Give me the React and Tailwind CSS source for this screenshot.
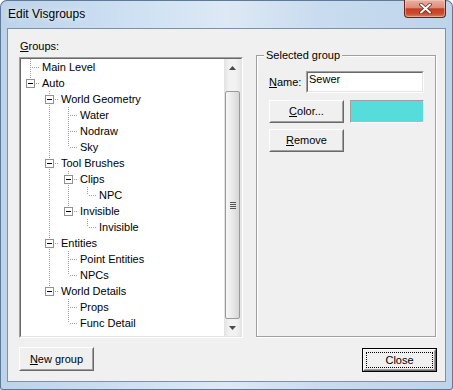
import React from 'react';

const FONT = { fontFamily: '"Liberation Sans", Arial, sans-serif' };

// tree rows: level, label, box (has children), last sibling, ancestor lines continue
const rows = [
  { label: 'Main Level', level: 0, box: false, last: false, cont: [] },
  { label: 'Auto', level: 0, box: true, last: true, cont: [] },
  { label: 'World Geometry', level: 1, box: true, last: false, cont: [false] },
  { label: 'Water', level: 2, box: false, last: false, cont: [false, true] },
  { label: 'Nodraw', level: 2, box: false, last: false, cont: [false, true] },
  { label: 'Sky', level: 2, box: false, last: true, cont: [false, true] },
  { label: 'Tool Brushes', level: 1, box: true, last: false, cont: [false] },
  { label: 'Clips', level: 2, box: true, last: false, cont: [false, true] },
  { label: 'NPC', level: 3, box: false, last: true, cont: [false, true, true] },
  { label: 'Invisible', level: 2, box: true, last: true, cont: [false, true] },
  { label: 'Invisible', level: 3, box: false, last: true, cont: [false, true, false] },
  { label: 'Entities', level: 1, box: true, last: false, cont: [false] },
  { label: 'Point Entities', level: 2, box: false, last: false, cont: [false, true] },
  { label: 'NPCs', level: 2, box: false, last: true, cont: [false, true] },
  { label: 'World Details', level: 1, box: true, last: true, cont: [false] },
  { label: 'Props', level: 2, box: false, last: false, cont: [false, false] },
  { label: 'Func Detail', level: 2, box: false, last: true, cont: [false, false] },
];

function Connector({ level, box, last, cont }) {
  const w = 21 + level * 19;
  const x = (k) => 9 + k * 19 + 0.5;
  const dot = { stroke: '#a0a0a0', strokeDasharray: '1 1' };
  return (
    <svg width={w} height={16} className="shrink-0" shapeRendering="crispEdges">
      {cont.map((c, k) =>
        c ? <line key={k} x1={x(k)} x2={x(k)} y1={0} y2={16} {...dot} /> : null
      )}
      <line x1={x(level)} x2={x(level)} y1={0} y2={last ? 8 : 16} {...dot} />
      <line x1={x(level) + 1.5} x2={w - 2} y1={8.5} y2={8.5} {...dot} />
      {box && (
        <>
          <rect x={x(level) - 4} y={4.5} width={8} height={8} fill="#fff" stroke="#919191" />
          <line x1={x(level) - 2.5} x2={x(level) + 2.5} y1={8.5} y2={8.5} stroke="#000" />
        </>
      )}
    </svg>
  );
}

function Scrollbar() {
  return (
    <div className="flex w-[17px] shrink-0 flex-col bg-[linear-gradient(90deg,#e2e2e2,#f2f2f2_30%,#f2f2f2_70%,#e6e6e6)]">
      <div className="flex h-[17px] items-center justify-center">
        <svg width="7" height="4"><path d="M3.5 0 L7 4 L0 4 Z" fill="#4a4a4a" /></svg>
      </div>
      <div className="h-[15px]" />
      <div className="mx-px flex h-[228px] items-center justify-center rounded-[2px] border border-[#999] bg-[linear-gradient(90deg,#f7f7f7,#e9e9e9_50%,#d6d6d6)]">
        <div className="flex flex-col gap-px">
          <div className="h-px w-[6px] bg-[#555]" />
          <div className="h-px w-[6px] bg-[#555]" />
          <div className="h-px w-[6px] bg-[#555]" />
          <div className="h-px w-[6px] bg-[#555]" />
        </div>
      </div>
      <div className="flex h-[17px] items-center justify-center">
        <svg width="7" height="4"><path d="M0 0 L7 0 L3.5 4 Z" fill="#4a4a4a" /></svg>
      </div>
    </div>
  );
}

function Button({ children, w = 'w-[75px]', h = 'h-[23px]', isDefault = false }) {
  const inner = (
    <div className="flex h-full w-full border border-t-white border-l-white border-b-[#696969] border-r-[#696969]">
      <div className="flex h-full w-full items-center justify-center border border-t-[#f0f0f0] border-l-[#f0f0f0] border-b-[#a0a0a0] border-r-[#a0a0a0] bg-[#f0f0f0]">
        {isDefault ? (
          <div className="flex h-[calc(100%-2px)] w-[calc(100%-2px)] items-center justify-center border border-dotted border-black">
            {children}
          </div>
        ) : (
          children
        )}
      </div>
    </div>
  );
  return (
    <div className={`${w} ${h} shrink-0 text-[11px] leading-[13px] text-black ${isDefault ? 'border border-black' : ''}`}>
      {inner}
    </div>
  );
}

export default function App() {
  return (
    <div
      style={FONT}
      className="flex h-[390px] w-[453px] flex-col overflow-hidden rounded-t-[7px] rounded-b-[3px] bg-[linear-gradient(90deg,#bcd3ea_0%,#d2e3f3_35%,#dde9f5_50%,#c9dcef_70%,#bed4eb_100%)] shadow-[inset_0_0_0_1px_#5f7a96]"
    >
      {/* title bar */}
      <div className="flex h-[28px] shrink-0 items-start">
        <span className="ml-[8px] mt-[7px] text-[12px] leading-[14px] text-black [text-shadow:0_0_6px_#fff]">
          Edit Visgroups
        </span>
        <div className="ml-auto mr-[7px] flex h-[18px] w-[42px] items-center justify-center rounded-b-[4px] border border-t-0 border-[#6b2116] bg-[linear-gradient(180deg,#eab0a2_0%,#dc8d7a_45%,#c33f24_52%,#c94d2e_80%,#dd7e5c_100%)] shadow-[inset_0_0_0_1px_rgba(255,220,210,0.45)]">
          <svg width="13" height="11" viewBox="0 0 13 11">
            <path d="M2 1.5 L11 9.5 M11 1.5 L2 9.5" stroke="#6a2a20" strokeWidth="3.6" strokeLinecap="round" />
            <path d="M2 1.5 L11 9.5 M11 1.5 L2 9.5" stroke="#fff" strokeWidth="2" strokeLinecap="round" />
          </svg>
        </div>
      </div>

      {/* client area */}
      <div className="mx-[7px] flex h-[354px] shrink-0 flex-col border border-[#7d91a8] bg-[#f0f0f0] text-[11px] text-black">
        <div className="flex items-start">
          {/* left column */}
          <div className="ml-[11px] flex w-[224px] flex-col">
            <div className="mt-[11px] pl-px leading-[13px]">
              <u>G</u>roups:
            </div>
            <div className="mt-[4px] h-[281px] border border-t-[#a0a0a0] border-l-[#a0a0a0] border-b-white border-r-white">
              <div className="flex h-full border border-t-[#696969] border-l-[#696969] border-b-[#e3e3e3] border-r-[#e3e3e3] bg-white">
                <div className="flex-1 overflow-hidden">
                  {rows.map((r, i) => (
                    <div key={i} className="flex h-[16px] items-center">
                      <Connector {...r} />
                      <span className="whitespace-nowrap leading-[16px]">{r.label}</span>
                    </div>
                  ))}
                </div>
                <Scrollbar />
              </div>
            </div>
          </div>

          {/* right column: group box */}
          <div className="relative ml-[13px] mt-[26px] h-[282px] w-[180px] border border-[#a0a0a0] shadow-[inset_1px_1px_0_#fff,1px_1px_0_#fff]">
            <span className="absolute left-[7px] top-[-7px] bg-[#f0f0f0] px-[2px] leading-[13px]">
              Selected group
            </span>
            <div className="flex flex-col pl-[12px] pt-[15px]">
              <div className="flex items-center">
                <div className="w-[37px] leading-[13px]">
                  <u>N</u>ame:
                </div>
                <div className="h-[22px] w-[118px] border border-t-[#a0a0a0] border-l-[#a0a0a0] border-b-white border-r-white">
                  <div className="h-full border border-t-[#696969] border-l-[#696969] border-b-[#e3e3e3] border-r-[#e3e3e3] bg-white pl-[1px] leading-[13px]">
                    Sewer
                  </div>
                </div>
              </div>
              <div className="mt-[7px] flex items-start">
                <Button>
                  <span>
                    <u>C</u>olor...
                  </span>
                </Button>
                <div className="ml-[6px] h-[23px] w-[74px] border border-t-[#a0a0a0] border-l-[#a0a0a0] border-b-white border-r-white bg-[#57dcdc]" />
              </div>
              <div className="mt-[6px]">
                <Button>
                  <span>
                    <u>R</u>emove
                  </span>
                </Button>
              </div>
            </div>
          </div>
        </div>

        {/* bottom buttons */}
        <div className="flex items-start justify-between">
          <div className="ml-[11px] mt-[9px]">
            <Button h="h-[24px]">
              <span>
                <u>N</u>ew group
              </span>
            </Button>
          </div>
          <div className="mr-[8px] mt-[10px]">
            <Button h="h-[24px]" isDefault>
              <span>Close</span>
            </Button>
          </div>
        </div>
      </div>
    </div>
  );
}
